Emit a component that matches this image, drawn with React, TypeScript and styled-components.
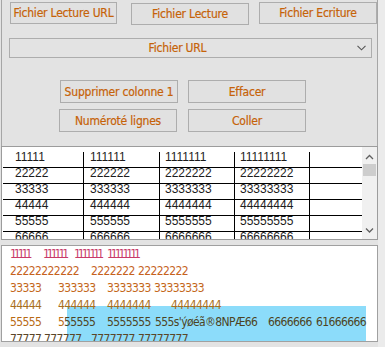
import React from "react";
import styled, { createGlobalStyle } from "styled-components";

const Global = createGlobalStyle`
  html, body { margin: 0; padding: 0; background: #e3e3e3; }
  #root { width: 385px; height: 347px; }
`;

const COND = `"DejaVu Sans Condensed", "DejaVu Sans", sans-serif`;
const ORANGE = "#c66208";

const Root = styled.div`
  width: 385px;
  height: 347px;
  display: flex;
  overflow: hidden;
  background: #e3e3e3;
`;

const Main = styled.div`
  width: 378px;
  display: flex;
  flex-direction: column;
`;

const Edge = styled.div`
  width: 7px;
  background: #ebebeb;
`;

const TopPanel = styled.div`
  margin-left: 1px;
  width: 377px;
  height: 146px;
  box-sizing: border-box;
  border-left: 1px solid #a6a6a6;
  border-right: 1px solid #a6a6a6;
  display: flex;
  flex-direction: column;
`;

const ButtonRow = styled.div<{ $pt?: number; $mt?: number; $pl: number }>`
  display: flex;
  align-items: flex-start;
  padding-top: ${(p) => p.$pt ?? 0}px;
  margin-top: ${(p) => p.$mt ?? 0}px;
  padding-left: ${(p) => p.$pl}px;
`;

const Button = styled.button<{ $w: number; $h: number; $ml?: number; $mt?: number }>`
  width: ${(p) => p.$w}px;
  height: ${(p) => p.$h}px;
  margin: ${(p) => p.$mt ?? 0}px 0 0 ${(p) => p.$ml ?? 0}px;
  box-sizing: border-box;
  border: 1px solid #adadad;
  background: #e1e1e1;
  color: ${ORANGE};
  font-family: ${COND};
  font-stretch: condensed;
  font-size: 12px;
  letter-spacing: -0.2px;
  -webkit-text-stroke: 0.2px ${ORANGE};
  padding: 0;
  display: flex;
  align-items: center;
  justify-content: center;
  white-space: nowrap;
`;

const Select = styled.div`
  margin: 13px 0 0 7px;
  width: 363px;
  height: 20px;
  box-sizing: border-box;
  border: 1px solid #adadad;
  background: #e3e3e3;
  display: flex;
  align-items: center;
`;

const SelectLabel = styled.span`
  flex: 1;
  text-align: center;
  padding-right: 12px;
  color: ${ORANGE};
  font-family: ${COND};
  font-stretch: condensed;
  font-size: 12px;
  letter-spacing: -0.2px;
  -webkit-text-stroke: 0.2px ${ORANGE};
`;

const SelectChevron = styled.svg`
  width: 9px;
  height: 6px;
  margin-right: 5px;
`;

const GridBox = styled.div`
  margin-left: 1px;
  width: 377px;
  height: 94px;
  box-sizing: border-box;
  border: 1px solid #9c9c9c;
  background: #fff;
  display: flex;
  overflow: hidden;
`;

const Rows = styled.div`
  flex: 1;
  padding: 5px 0 0 1px;
  overflow: hidden;
`;

const Row = styled.div`
  display: flex;
  width: 359px;
  height: 16px;
  box-sizing: border-box;
  border-bottom: 1px solid #000;
`;

const Cell = styled.div<{ $w?: number; $pl: number; $last?: boolean }>`
  ${(p) => (p.$w ? `width: ${p.$w}px;` : "flex: 1;")}
  flex-shrink: 0;
  box-sizing: border-box;
  padding-left: ${(p) => p.$pl}px;
  border-right: ${(p) => (p.$last ? "none" : "1px solid #000")};
  font-family: "Liberation Sans", Arial, sans-serif;
  font-size: 12px;
  line-height: 10px;
  color: #1c1c1c;
  white-space: nowrap;
`;

const ScrollBar = styled.div`
  width: 15px;
  background: #f0f0f0;
  display: flex;
  flex-direction: column;
`;

const ScrollArrow = styled.svg`
  width: 15px;
  height: 17px;
  flex-shrink: 0;
`;

const Thumb = styled.div`
  margin-left: 1px;
  width: 13px;
  height: 12px;
  background: #cdcdcd;
`;

const ScrollTrack = styled.div`
  flex: 1;
`;

const Gap = styled.div`
  height: 5px;
  flex-shrink: 0;
`;

const TextBox = styled.div`
  margin-left: 1px;
  width: 377px;
  height: 97px;
  flex-shrink: 0;
  box-sizing: border-box;
  border: 1px solid #a0a0a0;
  background: #fff;
  position: relative;
  overflow: hidden;
  padding-left: 8px;
  font-family: ${COND};
  font-stretch: condensed;
  font-size: 12px;
  line-height: 17px;
`;

const Selection = styled.div`
  position: absolute;
  left: 65px;
  top: 60px;
  width: 299px;
  height: 40px;
  background: #8cdcfa;
`;

const TLine = styled.div`
  position: relative;
  display: flex;
  height: 17px;
  white-space: pre;
`;

const Token = styled.span<{ $c: string; $ls: number }>`
  display: inline-block;
  flex-shrink: 0;
  color: ${(p) => p.$c};
  letter-spacing: ${(p) => p.$ls}px;
`;

const BottomStrip = styled.div`
  height: 5px;
  flex-shrink: 0;
`;

type Tok = { x: number; t: string; c: string };

const L1 = "#c83a68";
const L2 = "#c6621c";
const L3 = "#c4671a";
const L4 = "#a86e1c";
const L5 = "#b86a14";
const L5D = "#4c4424";
const L6 = "#5a4628";

const lines: { ls: number; toks: Tok[] }[] = [
  {
    ls: -3,
    toks: [
      { x: 10, t: "11111", c: L1 },
      { x: 43, t: "111111", c: L1 },
      { x: 74, t: "1111111", c: L1 },
      { x: 107, t: "11111111", c: L1 },
    ],
  },
  {
    ls: -0.6,
    toks: [
      { x: 10, t: "22222222222", c: L2 },
      { x: 91, t: "2222222", c: L2 },
      { x: 138, t: "22222222", c: L2 },
    ],
  },
  {
    ls: -0.6,
    toks: [
      { x: 10, t: "33333", c: L3 },
      { x: 58, t: "333333", c: L3 },
      { x: 107, t: "3333333", c: L3 },
      { x: 154, t: "33333333", c: L3 },
    ],
  },
  {
    ls: -0.6,
    toks: [
      { x: 10, t: "44444", c: L4 },
      { x: 58, t: "444444", c: L4 },
      { x: 107, t: "4444444", c: L4 },
      { x: 171, t: "44444444", c: L4 },
    ],
  },
  {
    ls: -0.6,
    toks: [
      { x: 10, t: "55555", c: L5 },
      { x: 58, t: "5", c: L5 },
      { x: 64, t: "55555", c: L5D },
      { x: 107, t: "5555555", c: L5D },
      { x: 155, t: "555s'ýøéã®8NPÆ66", c: L5D },
      { x: 268, t: "6666666", c: L5D },
      { x: 316, t: "61666666", c: L5D },
    ],
  },
  {
    ls: -0.6,
    toks: [
      { x: 10, t: "77777", c: L6 },
      { x: 44, t: "777777", c: L6 },
      { x: 91, t: "7777777", c: L6 },
      { x: 138, t: "77777777", c: L6 },
    ],
  },
];

const gridRows = ["1", "2", "3", "4", "5", "6"];

export default function App() {
  return (
    <>
      <Global />
      <Root>
        <Main>
          <TopPanel>
            <ButtonRow $pt={2} $pl={8}>
              <Button $w={107} $h={22}>Fichier Lecture URL</Button>
              <Button $w={118} $h={22} $ml={14} $mt={1}>Fichier Lecture</Button>
              <Button $w={118} $h={22} $ml={10}>Fichier Ecriture</Button>
            </ButtonRow>
            <Select>
              <SelectLabel>Fichier URL</SelectLabel>
              <SelectChevron viewBox="0 0 9 6">
                <polyline points="0.5,0.8 4.5,4.8 8.5,0.8" fill="none" stroke="#555" strokeWidth="1.1" />
              </SelectChevron>
            </Select>
            <ButtonRow $mt={22} $pl={58}>
              <Button $w={118} $h={23}>Supprimer colonne 1</Button>
              <Button $w={118} $h={23} $ml={10}>Effacer</Button>
            </ButtonRow>
            <ButtonRow $mt={6} $pl={57}>
              <Button $w={118} $h={23}>Numéroté lignes</Button>
              <Button $w={118} $h={23} $ml={11}>Coller</Button>
            </ButtonRow>
          </TopPanel>
          <GridBox>
            <Rows>
              {gridRows.map((d) => (
                <Row key={d}>
                  <Cell $w={81} $pl={12}>{d.repeat(5)}</Cell>
                  <Cell $w={76} $pl={6}>{d.repeat(6)}</Cell>
                  <Cell $w={75} $pl={5}>{d.repeat(7)}</Cell>
                  <Cell $w={75} $pl={5}>{d.repeat(8)}</Cell>
                  <Cell $pl={0} $last />
                </Row>
              ))}
            </Rows>
            <ScrollBar>
              <ScrollArrow viewBox="0 0 15 17">
                <polyline points="4,12 7.5,8.5 11,12" fill="none" stroke="#606060" strokeWidth="1.3" />
              </ScrollArrow>
              <Thumb />
              <ScrollTrack />
              <ScrollArrow viewBox="0 0 15 17">
                <polyline points="4,6.5 7.5,10 11,6.5" fill="none" stroke="#606060" strokeWidth="1.3" />
              </ScrollArrow>
            </ScrollBar>
          </GridBox>
          <Gap />
          <TextBox>
            <Selection />
            {lines.map((ln, i) => (
              <TLine key={i}>
                {ln.toks.map((tk, j) => {
                  const next = ln.toks[j + 1];
                  return (
                    <Token
                      key={j}
                      $c={tk.c}
                      $ls={ln.ls}
                      style={next ? { width: next.x - tk.x } : undefined}
                    >
                      {tk.t}
                    </Token>
                  );
                })}
              </TLine>
            ))}
          </TextBox>
          <BottomStrip />
        </Main>
        <Edge />
      </Root>
    </>
  );
}
